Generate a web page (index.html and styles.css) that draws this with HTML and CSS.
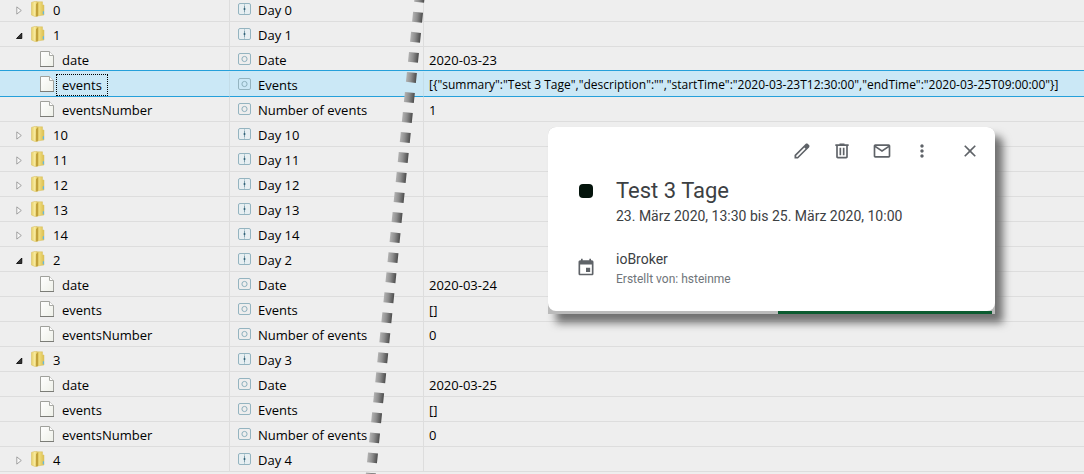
FILE: index.html
```
<!DOCTYPE html>
<html lang="de">
<head>
<meta charset="utf-8">
<title>ioBroker – Events</title>
<link rel="stylesheet" href="styles.css">
</head>
<body>
<svg class="defs" aria-hidden="true">
  <defs>
    <linearGradient id="gold" x1="0" x2="1"><stop offset="0" stop-color="#e6cf68"/><stop offset=".5" stop-color="#f8eb9f"/><stop offset="1" stop-color="#e0c55a"/></linearGradient>
    <linearGradient id="pane" x1="0" x2="1"><stop offset="0" stop-color="#c9a93d"/><stop offset=".4" stop-color="#f0dc7c"/><stop offset="1" stop-color="#dabf52"/></linearGradient>
    <linearGradient id="paper" x1="0" y1="0" x2="1" y2="1"><stop offset="0" stop-color="#fff"/><stop offset="1" stop-color="#eef0e8"/></linearGradient>
    <symbol id="folder" viewBox="0 0 14 16">
      <path d="M5 .8 11.500.8V4H13v10L6 15z" fill="url(#pane)" stroke="#d9c063" stroke-width=".5"/>
      <path d="M.4 1.400 4.200.3 7 1.500V15L4.500 15.700.4 14z" fill="url(#gold)" stroke="#d6bd5c" stroke-width=".5"/>
      <path d="M5 3 7 1.500V15L4.800 15.600z" fill="#c2a23a"/>
      <path d="M11.800 10.300h1.200v3h-1.200z" fill="#62b9e2"/>
    </symbol>
    <symbol id="file" viewBox="0 0 14 16">
      <path d="M.5.5h9l4 4v11H.5z" fill="url(#paper)" stroke="#a0a19c"/>
      <path d="M9.500.5v4h4" fill="#fff" stroke="#a9aaa5"/>
      <path d="M0 15.500h14" stroke="#7b7c77"/>
    </symbol>
    <symbol id="channel" viewBox="0 0 13 12">
      <rect x=".5" y=".5" width="12" height="11" rx="1.500" fill="#e7eff2" stroke="#94b4c0"/>
      <path d="M6.500 1v2M6.500 9v2" stroke="#b4cad2"/><path d="M6.500 3v6" stroke="#7b9dab"/><path d="M5.700 6h1.600" stroke="#35647a" stroke-width="2"/>
    </symbol>
    <symbol id="state" viewBox="0 0 13 12">
      <rect x=".5" y=".5" width="12" height="11" rx="1.500" fill="none" stroke="#94b4c0"/>
      <circle cx="6.500" cy="6" r="2.600" fill="none" stroke="#8db0bd"/>
    </symbol>
    <symbol id="closed" viewBox="0 0 7 9"><path d="M.8.9v7.200L5.300 4.500z" fill="#f8f8f8" stroke="#999" stroke-width=".9"/></symbol>
    <symbol id="open" viewBox="0 0 7 9"><path d="M.5 7.500h5.300V2z" fill="#333" stroke="#000" stroke-width=".8"/></symbol>
  </defs>
</svg>

<main class="objects">
<table class="tree">
  <colgroup><col class="col-id"><col class="col-name"><col class="col-value"></colgroup>
  <tbody>
  <tr><td><div class="cell"><button class="toggle" aria-label="0 öffnen"><svg><use href="#closed"/></svg></button><svg class="icon"><use href="#folder"/></svg><span class="label">0</span></div></td><td><div class="cell name"><svg class="role"><use href="#channel"/></svg>Day 0</div></td><td></td></tr>
  <tr><td><div class="cell"><button class="toggle" aria-label="1 schließen"><svg><use href="#open"/></svg></button><svg class="icon"><use href="#folder"/></svg><span class="label">1</span></div></td><td><div class="cell name"><svg class="role"><use href="#channel"/></svg>Day 1</div></td><td></td></tr>
  <tr><td><div class="cell leaf"><svg class="icon"><use href="#file"/></svg><span class="label">date</span></div></td><td><div class="cell name"><svg class="role"><use href="#state"/></svg>Date</div></td><td>2020-03-23</td></tr>
  <tr class="selected"><td><div class="cell leaf"><svg class="icon"><use href="#file"/></svg><span class="label focused">events</span></div></td><td><div class="cell name"><svg class="role"><use href="#state"/></svg>Events</div></td><td class="json">[{"summary":"Test 3 Tage","description":"","startTime":"2020-03-23T12:30:00","endTime":"2020-03-25T09:00:00"}]</td></tr>
  <tr><td><div class="cell leaf"><svg class="icon"><use href="#file"/></svg><span class="label">eventsNumber</span></div></td><td><div class="cell name"><svg class="role"><use href="#state"/></svg>Number of events</div></td><td>1</td></tr>
  <tr><td><div class="cell"><button class="toggle" aria-label="10 öffnen"><svg><use href="#closed"/></svg></button><svg class="icon"><use href="#folder"/></svg><span class="label">10</span></div></td><td><div class="cell name"><svg class="role"><use href="#channel"/></svg>Day 10</div></td><td></td></tr>
  <tr><td><div class="cell"><button class="toggle" aria-label="11 öffnen"><svg><use href="#closed"/></svg></button><svg class="icon"><use href="#folder"/></svg><span class="label">11</span></div></td><td><div class="cell name"><svg class="role"><use href="#channel"/></svg>Day 11</div></td><td></td></tr>
  <tr><td><div class="cell"><button class="toggle" aria-label="12 öffnen"><svg><use href="#closed"/></svg></button><svg class="icon"><use href="#folder"/></svg><span class="label">12</span></div></td><td><div class="cell name"><svg class="role"><use href="#channel"/></svg>Day 12</div></td><td></td></tr>
  <tr><td><div class="cell"><button class="toggle" aria-label="13 öffnen"><svg><use href="#closed"/></svg></button><svg class="icon"><use href="#folder"/></svg><span class="label">13</span></div></td><td><div class="cell name"><svg class="role"><use href="#channel"/></svg>Day 13</div></td><td></td></tr>
  <tr><td><div class="cell"><button class="toggle" aria-label="14 öffnen"><svg><use href="#closed"/></svg></button><svg class="icon"><use href="#folder"/></svg><span class="label">14</span></div></td><td><div class="cell name"><svg class="role"><use href="#channel"/></svg>Day 14</div></td><td></td></tr>
  <tr><td><div class="cell"><button class="toggle" aria-label="2 schließen"><svg><use href="#open"/></svg></button><svg class="icon"><use href="#folder"/></svg><span class="label">2</span></div></td><td><div class="cell name"><svg class="role"><use href="#channel"/></svg>Day 2</div></td><td></td></tr>
  <tr><td><div class="cell leaf"><svg class="icon"><use href="#file"/></svg><span class="label">date</span></div></td><td><div class="cell name"><svg class="role"><use href="#state"/></svg>Date</div></td><td>2020-03-24</td></tr>
  <tr><td><div class="cell leaf"><svg class="icon"><use href="#file"/></svg><span class="label">events</span></div></td><td><div class="cell name"><svg class="role"><use href="#state"/></svg>Events</div></td><td>[]</td></tr>
  <tr><td><div class="cell leaf"><svg class="icon"><use href="#file"/></svg><span class="label">eventsNumber</span></div></td><td><div class="cell name"><svg class="role"><use href="#state"/></svg>Number of events</div></td><td>0</td></tr>
  <tr><td><div class="cell"><button class="toggle" aria-label="3 schließen"><svg><use href="#open"/></svg></button><svg class="icon"><use href="#folder"/></svg><span class="label">3</span></div></td><td><div class="cell name"><svg class="role"><use href="#channel"/></svg>Day 3</div></td><td></td></tr>
  <tr><td><div class="cell leaf"><svg class="icon"><use href="#file"/></svg><span class="label">date</span></div></td><td><div class="cell name"><svg class="role"><use href="#state"/></svg>Date</div></td><td>2020-03-25</td></tr>
  <tr><td><div class="cell leaf"><svg class="icon"><use href="#file"/></svg><span class="label">events</span></div></td><td><div class="cell name"><svg class="role"><use href="#state"/></svg>Events</div></td><td>[]</td></tr>
  <tr><td><div class="cell leaf"><svg class="icon"><use href="#file"/></svg><span class="label">eventsNumber</span></div></td><td><div class="cell name"><svg class="role"><use href="#state"/></svg>Number of events</div></td><td>0</td></tr>
  <tr><td><div class="cell"><button class="toggle" aria-label="4 öffnen"><svg><use href="#closed"/></svg></button><svg class="icon"><use href="#folder"/></svg><span class="label">4</span></div></td><td><div class="cell name"><svg class="role"><use href="#channel"/></svg>Day 4</div></td><td></td></tr>
  </tbody>
</table>
</main>

<svg class="divider" viewBox="0 0 60 474" aria-hidden="true">
  <defs><linearGradient id="steel" gradientUnits="userSpaceOnUse" x1="-5" x2="5" y1="0" y2="0"><stop offset="0" stop-color="#b2b2b2"/><stop offset=".45" stop-color="#8e8e8e"/><stop offset="1" stop-color="#4c4c4c"/></linearGradient></defs>
  <g transform="translate(54.600 -2.700) rotate(5.840)"><path d="M0-5V495" stroke="url(#steel)" stroke-width="10" stroke-dasharray="10 10.130"/></g>
</svg>

<div class="popup" role="dialog" aria-labelledby="event-title">
  <section class="card">
    <div class="actions">
      <button aria-label="Bearbeiten"><svg viewBox="0 0 24 24"><path d="M20.410 4.940l-1.350-1.350c-.78-.78-2.050-.78-2.830 0L3 16.820V21h4.180L20.410 7.770c.79-.78.79-2.050 0-2.830zM6.410 19.060L5 19v-1.360l9.820-9.820 1.410 1.410-9.820 9.830z"/></svg></button>
      <button aria-label="Löschen"><svg viewBox="0 0 24 24"><path d="M15 4V3H9v1H4v2h1v13c0 1.100.9 2 2 2h10c1.100 0 2-.9 2-2V6h1V4h-5zm2 15H7V6h10v13zM9 8h2v9H9zm4 0h2v9h-2z"/></svg></button>
      <button aria-label="E-Mail senden"><svg viewBox="0 0 24 24"><path d="M20 4H4c-1.100 0-2 .9-2 2v12c0 1.100.9 2 2 2h16c1.100 0 2-.9 2-2V6c0-1.100-.9-2-2-2zm-.8 2L12 10.800 4.800 6h14.400zM4 18V7.870l8 5.330 8-5.330V18H4z"/></svg></button>
      <button aria-label="Optionen"><svg viewBox="0 0 24 24"><path d="M12 8c1.100 0 2-.9 2-2s-.9-2-2-2-2 .9-2 2 .9 2 2 2zm0 2c-1.100 0-2 .9-2 2s.9 2 2 2 2-.9 2-2-.9-2-2-2zm0 6c-1.100 0-2 .9-2 2s.9 2 2 2 2-.9 2-2-.9-2-2-2z"/></svg></button>
      <button class="close" aria-label="Schließen"><svg viewBox="0 0 24 24"><path d="M19 6.410L17.590 5 12 10.590 6.410 5 5 6.410 10.590 12 5 17.590 6.410 19 12 13.410 17.590 19 19 17.590 13.410 12z"/></svg></button>
    </div>
    <div class="row">
      <span class="swatch"></span>
      <div><h1 id="event-title">Test 3 Tage</h1><p class="when">23. März 2020, 13:30 bis 25. März 2020, 10:00</p></div>
    </div>
    <div class="row calendar">
      <svg class="calendar-icon" viewBox="0 0 24 24" aria-hidden="true"><path d="M19 4h-1V2h-2v2H8V2H6v2H5c-1.110 0-1.990.9-1.990 2L3 20c0 1.100.89 2 2 2h14c1.100 0 2-.9 2-2V6c0-1.100-.9-2-2-2zm0 16H5V9h14v11zm-7-7h5v5h-5z"/></svg>
      <div><p class="owner">ioBroker</p><p class="creator">Erstellt von: hsteinme</p></div>
    </div>
  </section>
  <div class="strip"></div>
</div>
</body>
</html>
```
FILE: styles.css
```
* { box-sizing: border-box; }
body {
  position: relative;
  margin: 0;
  height: 100vh;
  overflow: hidden;
  background: #eee;
  color: #000;
  font: 13px/22px "Open Sans", "Noto Sans", sans-serif;
}
button { padding: 0; border: 0; background: none; }
svg { display: block; }
h1, p { margin: 0; font-weight: 400; }
.defs { position: absolute; width: 0; height: 0; }

.objects { margin-top: -3px; }
.tree { width: 100%; table-layout: fixed; border-collapse: separate; border-spacing: 0; }
.col-id { width: 230px; }
.col-name { width: 194px; }
.tree td {
  height: 25px;
  padding: 2px 0 0 5px;
  border-bottom: 1px solid #ddd;
  border-right: 1px solid #ddd;
  white-space: nowrap;
}
.tree td:first-child { padding-left: 14px; }
.tree td:nth-child(2) { padding-left: 8px; }
.tree td:last-child { border-right: 0; }
.tree .selected td {
  border-right-color: #c3dde9;
  border-bottom-color: #26a0da;
  background: #cbe8f6;
  box-shadow: 0 -1px #cbe8f6, 0 -2px #26a0da;
}
.json { font-size: 12px; }
.cell { display: flex; align-items: center; height: 22px; }
.leaf { padding-left: 26px; }
.toggle { width: 17px; }
.toggle svg { width: 7px; height: 9px; margin-left: 2px; }
.icon { width: 14px; height: 16px; margin-bottom: 2px; }
.label { margin-left: 3px; padding: 0 5px; }
.focused { outline: 1px dotted #000; line-height: 20px; }
.role { width: 13px; height: 12px; margin: 0 7px 2px 0; }

.divider { position: absolute; top: 0; left: 365px; width: 60px; height: 474px; }

.popup {
  position: absolute;
  top: 127px;
  left: 548px;
  width: 447px;
  background: #bbb;
  border-radius: 8px 8px 0 0;
  box-shadow: 8px 9px 8px #707070;
  color: #3c4043;
  font-family: Roboto, sans-serif;
}
.card { padding: 14px 15px 22px 28px; border-radius: 8px; background: #fff; }
.actions { display: flex; justify-content: flex-end; gap: 20px; }
.actions svg { width: 20px; height: 20px; fill: #5f6368; }
.actions .close { margin-left: 8px; }
.row { display: grid; grid-template-columns: 40px 1fr; margin-top: 16px; }
.row > :first-child { justify-self: start; }
.swatch { width: 14px; height: 14px; margin: 7px 3px; border-radius: 4px; background: #04140c; }
h1 { font-size: 22px; line-height: 28px; }
.when { font-size: 14px; line-height: 22px; }
.calendar { margin-top: 22px; }
.calendar-icon { width: 20px; height: 20px; margin-top: 8px; fill: #5f6368; }
.owner { font-size: 14px; line-height: 20px; }
.creator { color: #70757a; font-size: 12px; line-height: 20px; }
.strip { width: 214px; height: 3px; margin: 0 3px 0 auto; background: #0b5b30; }
```
